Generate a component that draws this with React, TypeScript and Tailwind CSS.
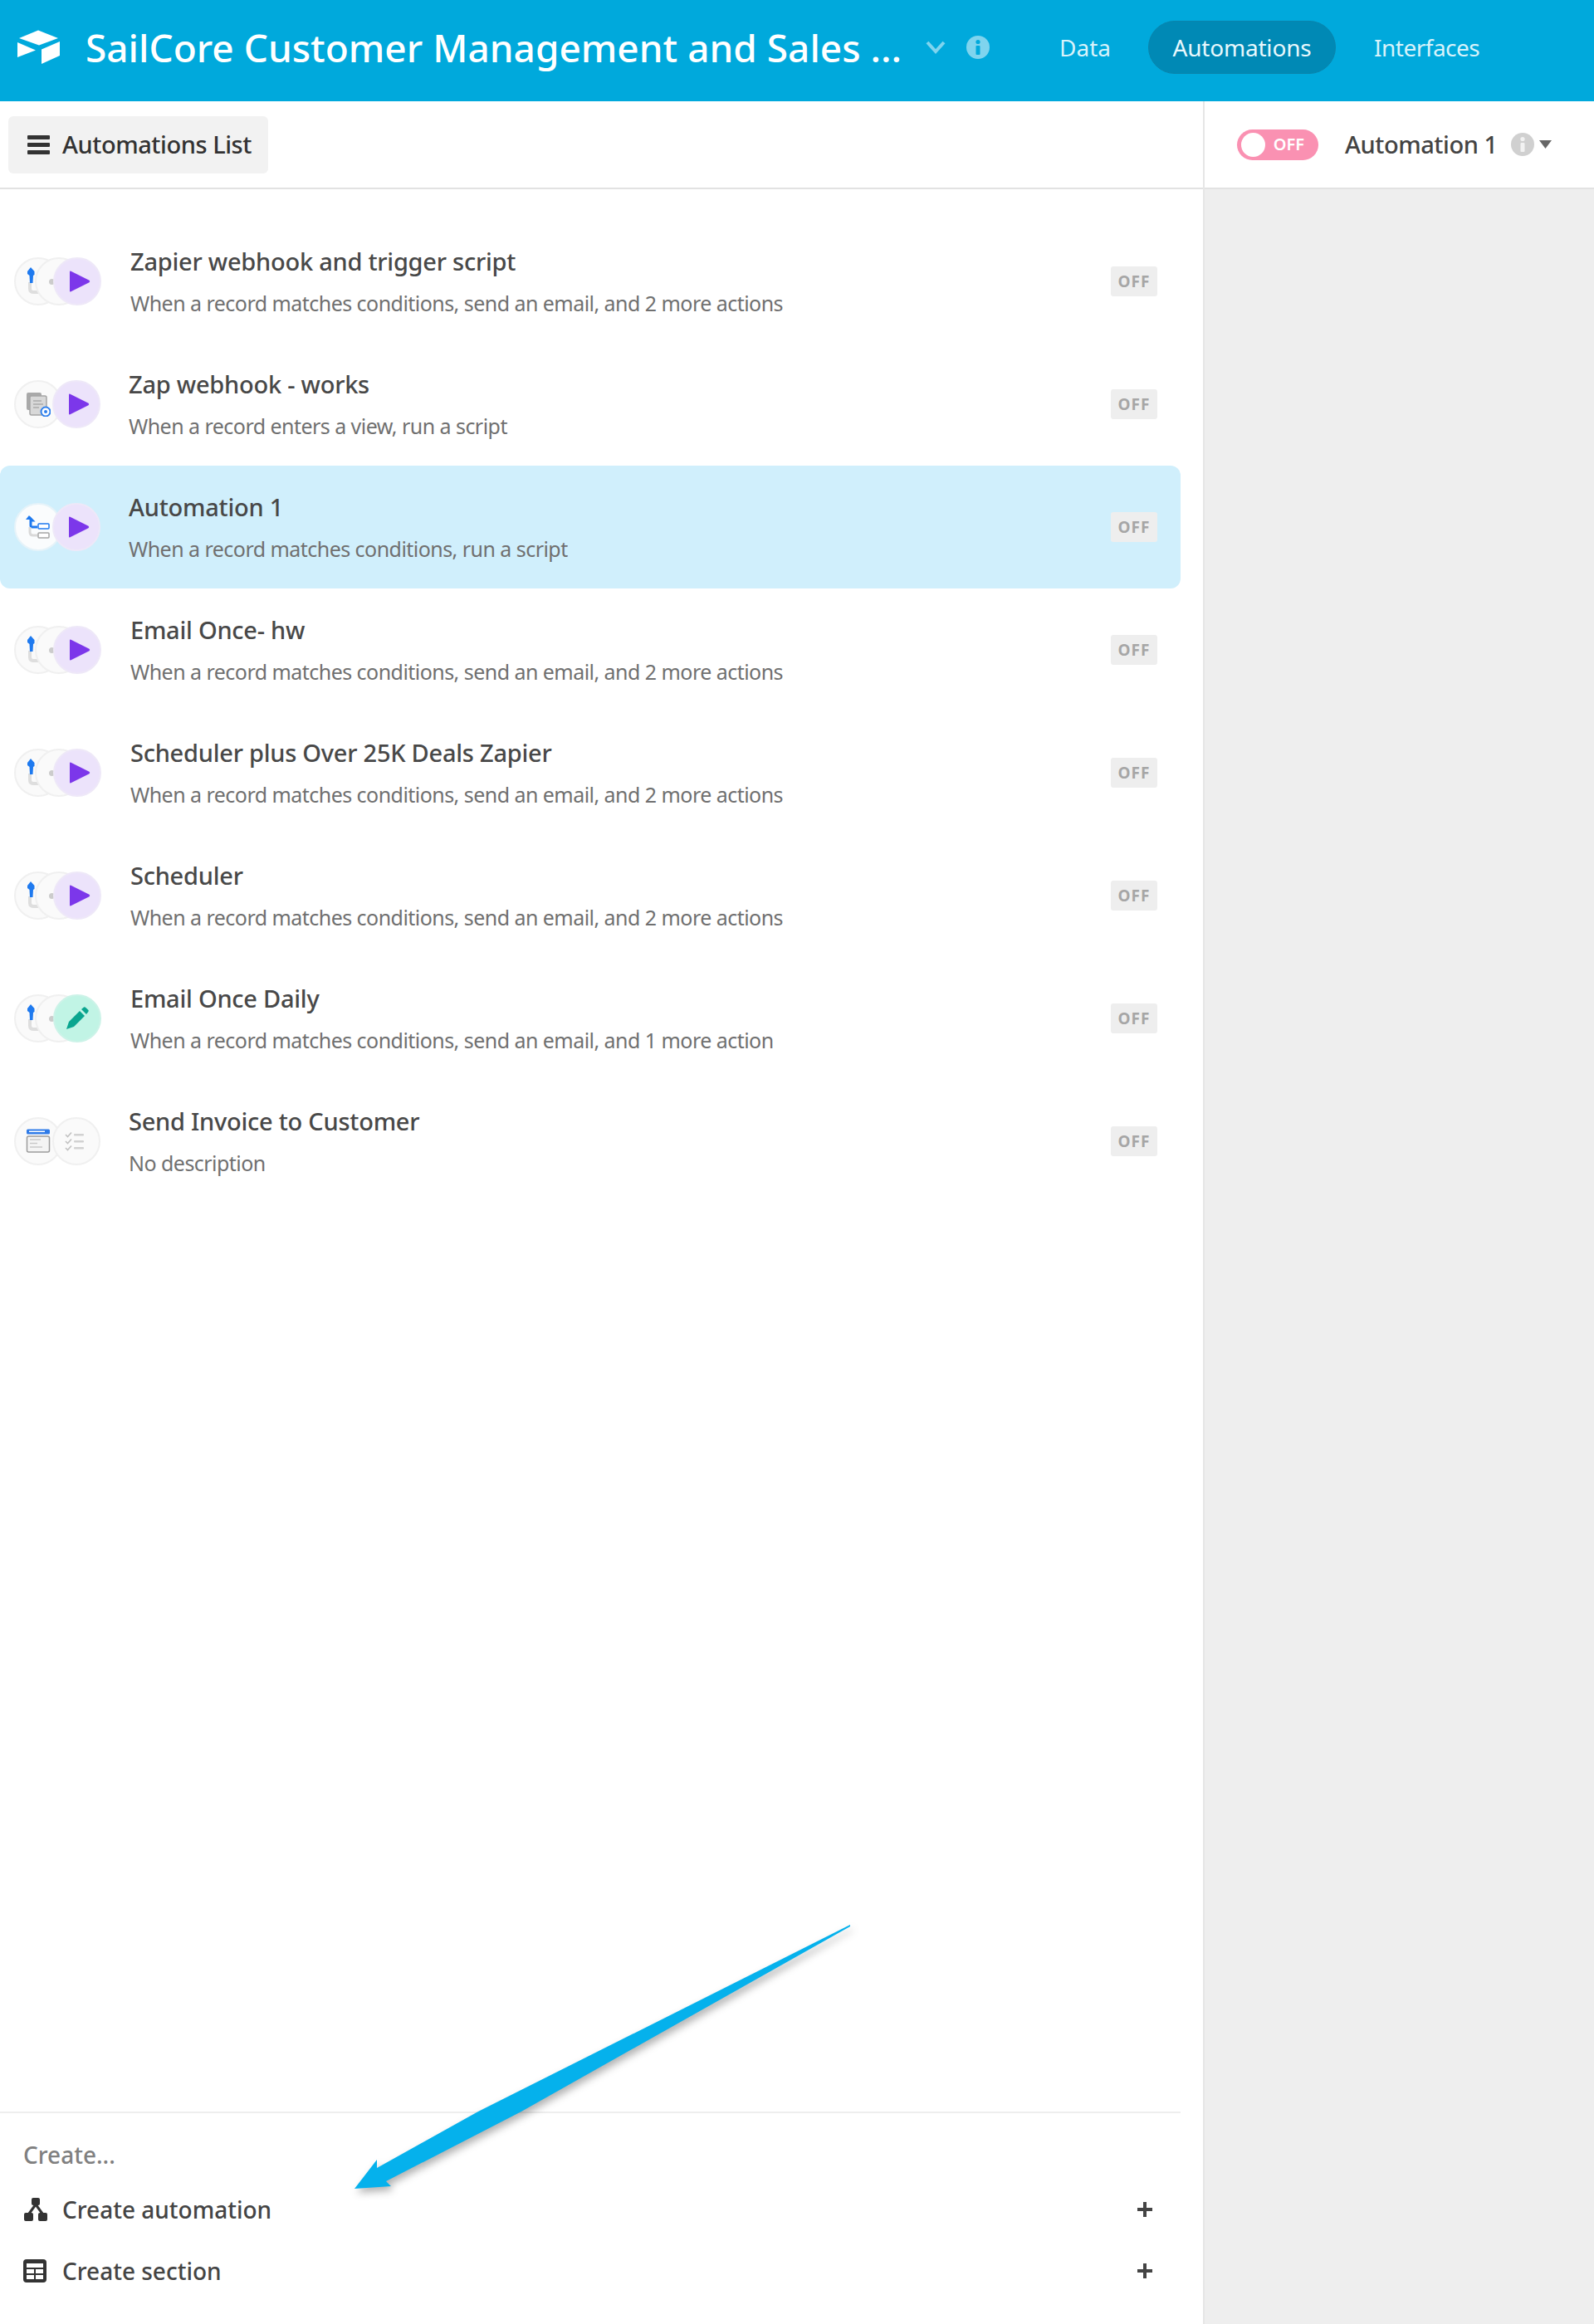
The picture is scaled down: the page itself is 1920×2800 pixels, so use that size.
const FONT = "font-['Noto_Sans','Open_Sans',sans-serif]";

function Logo() {
  return (
    <svg width="52" height="42" viewBox="0 0 52 42" className="shrink-0">
      <path d="M25 0.5 L49 10 L26 18.5 L2 10 Z" fill="#fff" />
      <path d="M0 15 L22 24.5 L0 33 Z" fill="#fff" />
      <path d="M29 23.5 L51 14 L51 31 L29 41 Z" fill="#fff" />
    </svg>
  );
}

function InfoDot({ size, bg, fg }: { size: number; bg: string; fg: string }) {
  return (
    <svg width={size} height={size} viewBox="0 0 28 28" className="shrink-0">
      <circle cx="14" cy="14" r="14" fill={bg} />
      <circle cx="14" cy="7.5" r="2.6" fill={fg} />
      <rect x="11.5" y="12" width="5" height="11" rx="1" fill={fg} />
    </svg>
  );
}

function Hamburger() {
  return (
    <svg width="27" height="24" viewBox="0 0 27 24" className="shrink-0">
      <rect x="0" y="1" width="27" height="5" rx="1" fill="#333" />
      <rect x="0" y="10" width="27" height="5" rx="1" fill="#333" />
      <rect x="0" y="19" width="27" height="5" rx="1" fill="#333" />
    </svg>
  );
}

function Circle({ className, children }: { className: string; children?: React.ReactNode }) {
  return (
    <div className={`w-[58px] h-[58px] rounded-full border-2 flex items-center justify-center shrink-0 ${className}`}>
      {children}
    </div>
  );
}

const grey = "bg-[#fafafa] border-[#f0f0f0]";

function Play() {
  return (
    <Circle className="bg-[#ece3fb] border-[#eee8f8] -ml-[7px] relative">
      <svg width="28" height="28" viewBox="0 0 28 28" className="ml-[3px]">
        <path d="M3 2.5 Q3 1 4.5 1.7 L26.5 12.8 Q28 14 26.5 15.2 L4.5 26.3 Q3 27 3 25.5 Z" fill="#7c37ea" />
      </svg>
    </Circle>
  );
}

function Pencil() {
  return (
    <Circle className="bg-[#c1f4e5] border-[#ccf3e8] -ml-[36px] relative">
      <svg width="30" height="30" viewBox="0 0 30 30">
        <path d="M2 28 L5 19 L18 6 L24 12 L11 25 Z" fill="#0aa58f" />
        <path d="M20 4 L23 1.5 Q24 1 25 1.7 L28.5 5 Q29 6 28.3 7 L26 10 Z" fill="#0aa58f" />
      </svg>
    </Circle>
  );
}

function Trigger() {
  return (
    <svg width="32" height="34" viewBox="0 0 32 34">
      <path d="M3 18 L3 26 Q3 30 8 30 L14 30" stroke="#dedede" strokeWidth="4" fill="none" />
      <path d="M4 0 L8.5 5 L8.5 9 L7 10 L6.5 19 L3 19 L2.5 10 L0 8 L0 5 Z" fill="#1f7aef" />
    </svg>
  );
}

function FirstBranch() {
  return (
    <Circle className={grey}>
      <div className="ml-[6px]"><Trigger /></div>
    </Circle>
  );
}

function MiddleDot() {
  return (
    <Circle className={`${grey} -ml-[33px] relative`}>
      <div className="w-[7px] h-[7px] rounded-full bg-[#cccccc] -ml-[18px]" />
    </Circle>
  );
}

function ViewIcon() {
  return (
    <Circle className={grey}>
      <svg width="30" height="30" viewBox="0 0 30 30">
        <rect x="1" y="1" width="18" height="21" rx="2" fill="#a9a9a9" />
        <rect x="5" y="5" width="20" height="23" rx="2" fill="#d8d8d8" stroke="#a5a5a5" strokeWidth="1.5" />
        <path d="M9 11 H19 M9 15 H21 M9 19 H16" stroke="#aaaaaa" strokeWidth="1.5" />
        <circle cx="24" cy="24" r="5.5" fill="#fff" stroke="#2f80ed" strokeWidth="2" />
        <circle cx="24" cy="24" r="2" fill="#2f80ed" />
      </svg>
    </Circle>
  );
}

function BranchIcon() {
  return (
    <Circle className="bg-[#fafcfd] border-[#e6f3f9]">
      <svg width="30" height="28" viewBox="0 0 30 28">
        <path d="M4 2 L8 6 H6 V12 Q6 14 8 14 H14" stroke="#1f7aef" strokeWidth="3" fill="none" />
        <path d="M4 0 L8.5 5 L0 5 Z" fill="#1f7aef" />
        <rect x="15" y="10" width="13" height="6" rx="1" fill="#fff" stroke="#1f7aef" strokeWidth="1.5" />
        <path d="M5 14 V20 Q5 24 9 24 H14" stroke="#d9d9d9" strokeWidth="3" fill="none" />
        <rect x="15" y="21" width="13" height="6" rx="1" fill="#fff" stroke="#a5a5a5" strokeWidth="1.5" />
      </svg>
    </Circle>
  );
}

function FormIcon() {
  return (
    <Circle className={grey}>
      <svg width="30" height="30" viewBox="0 0 30 30">
        <rect x="1" y="0.5" width="28" height="6" rx="1.5" fill="#2f7be8" />
        <rect x="4" y="2.5" width="19" height="1.5" fill="#ffffff" />
        <rect x="1.5" y="9" width="27" height="19" rx="2" fill="#f4f4f4" stroke="#9c9c9c" strokeWidth="1.5" />
        <path d="M5 13 H18 M5 17.5 H14 M5 22 H20" stroke="#c9c9c9" strokeWidth="1.5" />
      </svg>
    </Circle>
  );
}

function ChecklistIcon() {
  return (
    <Circle className={`${grey} -ml-[12px] relative`}>
      <svg width="24" height="24" viewBox="0 0 24 24" className="-ml-[4px]">
        <g fill="none" stroke="#c2c2c2" strokeWidth="1.6">
          <path d="M1 4 L3.5 6.5 L8 1.5" />
          <path d="M1 12 L3.5 14.5 L8 9.5" />
          <path d="M1 20 L3.5 22.5 L8 17.5" />
        </g>
        <rect x="11" y="3" width="12" height="2.6" rx="1" fill="#d2d2d2" />
        <rect x="11" y="11" width="12" height="2.6" rx="1" fill="#d2d2d2" />
        <rect x="11" y="19" width="12" height="2.6" rx="1" fill="#d2d2d2" />
      </svg>
    </Circle>
  );
}

const rows = [
  { kind: "play3", title: "Zapier webhook and trigger script", desc: "When a record matches conditions, send an email, and 2 more actions" },
  { kind: "view", title: "Zap webhook - works", desc: "When a record enters a view, run a script" },
  { kind: "branch", title: "Automation 1", desc: "When a record matches conditions, run a script", active: true },
  { kind: "play3", title: "Email Once- hw", desc: "When a record matches conditions, send an email, and 2 more actions" },
  { kind: "play3", title: "Scheduler plus Over 25K Deals Zapier", desc: "When a record matches conditions, send an email, and 2 more actions" },
  { kind: "play3", title: "Scheduler", desc: "When a record matches conditions, send an email, and 2 more actions" },
  { kind: "pencil", title: "Email Once Daily", desc: "When a record matches conditions, send an email, and 1 more action" },
  { kind: "form", title: "Send Invoice to Customer", desc: "No description" },
];

function RowIcons({ kind }: { kind: string }) {
  if (kind === "play3")
    return (
      <>
        <FirstBranch />
        <MiddleDot />
        <div className="-ml-[29px] relative"><Play /></div>
      </>
    );
  if (kind === "pencil")
    return (
      <>
        <FirstBranch />
        <MiddleDot />
        <div className="relative"><Pencil /></div>
      </>
    );
  if (kind === "view")
    return (
      <>
        <ViewIcon />
        <div className="-ml-[5px] relative"><Play /></div>
      </>
    );
  if (kind === "branch")
    return (
      <>
        <BranchIcon />
        <div className="-ml-[5px] relative"><Play /></div>
      </>
    );
  return (
    <>
      <FormIcon />
      <ChecklistIcon />
    </>
  );
}

function Row({ kind, title, desc, active }: { kind: string; title: string; desc: string; active?: boolean }) {
  const three = kind === "play3" || kind === "pencil";
  return (
    <div className={`h-[148px] w-[1422px] flex items-center pl-[17px] pr-[28px] rounded-[12px] ${active ? "bg-[#d0effc]" : ""}`}>
      <div className={`flex items-center shrink-0 ${three ? "w-[140px]" : "w-[138px]"}`}>
        <RowIcons kind={kind} />
      </div>
      <div className="flex-1 min-w-0 flex flex-col gap-[13px]">
        <div className="text-[29px] tracking-[-0.25px] leading-[38px] font-medium text-[#484848] whitespace-nowrap">{title}</div>
        <div className="text-[25px] tracking-[-0.54px] leading-[36px] text-[#707070] whitespace-nowrap">{desc}</div>
      </div>
      <div className="w-[56px] h-[36px] rounded-[3px] bg-[#eeeeee] flex items-center justify-center text-[19px] font-bold tracking-[1px] text-[#a6a6a6] shrink-0">
        OFF
      </div>
    </div>
  );
}

function Plus() {
  return (
    <svg width="20" height="20" viewBox="0 0 20 20" className="shrink-0">
      <path d="M10 1 V19 M1 10 H19" stroke="#444" strokeWidth="4" />
    </svg>
  );
}

export default function App() {
  return (
    <div className={`relative w-[1920px] h-[2800px] flex flex-col bg-white overflow-hidden ${FONT}`}>
      <header className="h-[122px] bg-[#00a9dc] flex items-center pl-[21px] pb-[8px] shrink-0">
        <Logo />
        <div className="ml-[30px] text-[46px] leading-[60px] font-medium text-white whitespace-nowrap w-[984px]">
          SailCore Customer Management and Sales ...
        </div>
        <svg width="24" height="16" viewBox="0 0 24 16" className="ml-[28px] shrink-0">
          <path d="M2 2 L12 13 L22 2" stroke="#7fd4ee" strokeWidth="4" fill="none" />
        </svg>
        <div className="ml-[25px]"><InfoDot size={28} bg="#7fd4ee" fg="#00a9dc" /></div>
        <div className="ml-[84px] text-[28px] text-[#d8f3fb] w-[107px]">Data</div>
        <div className="h-[64px] w-[226px] rounded-full bg-[#0089b5] border border-[#0a84ac] flex items-center justify-center text-[28px] tracking-[-0.2px] text-[#e8f8fd] font-normal">
          Automations
        </div>
        <div className="ml-[46px] text-[28px] tracking-[-0.5px] text-[#d8f3fb]">Interfaces</div>
      </header>

      <div className="flex-1 flex min-h-0">
        <div className="w-[1451px] border-r-2 border-[#e6e6e6] flex flex-col shrink-0">
          <div className="h-[106px] border-b-2 border-[#e2e2e2] flex items-center pl-[10px] shrink-0">
            <div className="h-[69px] w-[313px] rounded-[6px] bg-[#f2f2f2] flex items-center gap-[15px] pl-[23px] text-[29px] tracking-[-0.45px] font-medium text-[#333333]">
              <Hamburger />
              <span className="whitespace-nowrap">Automations List</span>
            </div>
          </div>
          <div className="pt-[37px]">
            {rows.map((r) => (
              <Row key={r.title} {...r} />
            ))}
          </div>
          <div className="mt-auto w-[1422px] border-t-2 border-[#eeeeee] pb-[27px]">
            <div className="pl-[28px] mt-[28px] text-[28px] leading-[44px] font-medium text-[#808080]">Create...</div>
            <div className="h-[74px] mt-[7px] flex items-center pl-[29px] pr-[33px]">
              <svg width="28" height="28" viewBox="0 0 28 28" className="shrink-0">
                <rect x="9" y="0" width="10" height="9" rx="2" fill="#333" />
                <path d="M14 8 L6 19 M14 8 L22 19" stroke="#333" strokeWidth="3" fill="none" />
                <rect x="0" y="18" width="11" height="10" rx="2" fill="#333" />
                <rect x="17" y="18" width="11" height="10" rx="2" fill="#333" />
              </svg>
              <span className="ml-[18px] flex-1 text-[28px] font-medium text-[#444444]">Create automation</span>
              <Plus />
            </div>
            <div className="h-[74px] flex items-center pl-[28px] pr-[33px]">
              <svg width="28" height="28" viewBox="0 0 28 28" className="shrink-0">
                <rect width="28" height="28" rx="4" fill="#333" />
                <rect x="4" y="5" width="20" height="5" fill="#fff" />
                <rect x="4" y="12" width="9" height="5" fill="#fff" />
                <rect x="15" y="12" width="9" height="5" fill="#fff" />
                <rect x="4" y="19" width="9" height="5" fill="#fff" />
                <rect x="15" y="19" width="9" height="5" fill="#fff" />
              </svg>
              <span className="ml-[19px] flex-1 text-[28px] font-medium text-[#444444]">Create section</span>
              <Plus />
            </div>
          </div>
        </div>

        <div className="flex-1 flex flex-col min-w-0">
          <div className="h-[106px] border-b-2 border-[#e2e2e2] bg-white flex items-center pl-[39px] shrink-0">
            <div className="relative w-[98px] h-[37px] rounded-full bg-[#fa91b2] flex items-center justify-end pr-[17px] text-[20px] font-semibold text-white">
              <span className="absolute left-[5px] top-[4px] w-[29px] h-[29px] rounded-full bg-white" />
              OFF
            </div>
            <span className="ml-[32px] text-[29px] tracking-[-0.45px] font-medium text-[#444444] whitespace-nowrap">Automation 1</span>
            <div className="ml-[16px]"><InfoDot size={28} bg="#d0d0d0" fg="#f2f2f2" /></div>
            <svg width="15" height="12" viewBox="0 0 15 12" className="ml-[6px] shrink-0">
              <path d="M0 1 H15 L7.5 11 Z" fill="#666" />
            </svg>
          </div>
          <div className="flex-1 bg-[#eeeeee]" />
        </div>
      </div>

      <svg width="1920" height="2800" viewBox="0 0 1920 2800" className="absolute inset-0 pointer-events-none drop-shadow-[3px_5px_5px_rgba(0,0,0,0.3)]">
        <path d="M1024 2319 L1024 2321 L628 2544 L465 2628 L471 2634 L427 2637 L454 2602 L454 2612 L576 2544 Z" fill="#05b1ec" />
      </svg>
    </div>
  );
}
